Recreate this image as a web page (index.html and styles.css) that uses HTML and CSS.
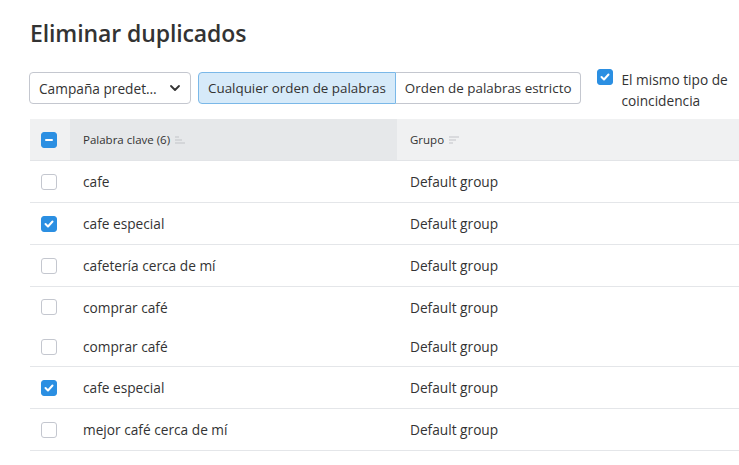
FILE: index.html
```html
<!DOCTYPE html>
<html lang="es">
<head>
<meta charset="utf-8">
<link rel="stylesheet" href="styles.css">
</head>
<body>
<div class="page">
  <h1 class="title">Eliminar duplicados</h1>
  <div class="controls">
    <div class="select">
      <span class="select-text">Campaña predet…</span>
      <svg class="chev" width="12" height="8" viewBox="0 0 12 8"><path d="M2 2l4 4 4-4" fill="none" stroke="#333" stroke-width="1.8" stroke-linecap="round" stroke-linejoin="round"/></svg>
    </div>
    <div class="segmented">
      <button class="seg active">Cualquier orden de palabras</button>
      <button class="seg">Orden de palabras estricto</button>
    </div>
    <label class="option">
      <span class="cb checked"><svg width="10" height="8" viewBox="0 0 10 8"><path d="M1.5 4l2.5 2.5 4.5-5" fill="none" stroke="#fff" stroke-width="2" stroke-linecap="round" stroke-linejoin="round"/></svg></span>
      <span class="option-text">El mismo tipo de<br>coincidencia</span>
    </label>
  </div>
  <div class="table">
    <div class="row head">
      <div class="c-check"><span class="cb checked"><span class="dash"></span></span></div>
      <div class="c-kw sorted">Palabra clave (6)
        <svg class="sort" width="10" height="8" viewBox="0 0 10 8"><path d="M0 1h4M0 4h7M0 7h10" stroke="#c2c4c8" stroke-width="1.2"/></svg>
      </div>
      <div class="c-grp">Grupo
        <svg class="sort" width="10" height="8" viewBox="0 0 10 8"><path d="M0 1h10M0 4h7M0 7h4" stroke="#c2c4c8" stroke-width="1.2"/></svg>
      </div>
    </div>
    <div class="row">
      <div class="c-check"><span class="cb"></span></div>
      <div class="c-kw">cafe</div>
      <div class="c-grp">Default group</div>
    </div>
    <div class="row">
      <div class="c-check"><span class="cb checked"><svg width="10" height="8" viewBox="0 0 10 8"><path d="M1.5 4l2.5 2.5 4.5-5" fill="none" stroke="#fff" stroke-width="2" stroke-linecap="round" stroke-linejoin="round"/></svg></span></div>
      <div class="c-kw">cafe especial</div>
      <div class="c-grp">Default group</div>
    </div>
    <div class="row">
      <div class="c-check"><span class="cb"></span></div>
      <div class="c-kw">cafetería cerca de mí</div>
      <div class="c-grp">Default group</div>
    </div>
    <div class="row short noborder">
      <div class="c-check"><span class="cb"></span></div>
      <div class="c-kw">comprar café</div>
      <div class="c-grp">Default group</div>
    </div>
    <div class="row short">
      <div class="c-check"><span class="cb"></span></div>
      <div class="c-kw">comprar café</div>
      <div class="c-grp">Default group</div>
    </div>
    <div class="row">
      <div class="c-check"><span class="cb checked"><svg width="10" height="8" viewBox="0 0 10 8"><path d="M1.5 4l2.5 2.5 4.5-5" fill="none" stroke="#fff" stroke-width="2" stroke-linecap="round" stroke-linejoin="round"/></svg></span></div>
      <div class="c-kw">cafe especial</div>
      <div class="c-grp">Default group</div>
    </div>
    <div class="row">
      <div class="c-check"><span class="cb"></span></div>
      <div class="c-kw">mejor café cerca de mí</div>
      <div class="c-grp">Default group</div>
    </div>
  </div>
</div>
</body>
</html>
```

FILE: styles.css
```css
* { box-sizing: border-box; }
html, body { margin: 0; padding: 0; background: #fff; }
body {
  font-family: "Open Sans", "Noto Sans", sans-serif;
  color: #333;
  font-size: 13.7px;
  overflow: hidden;
}
.page { padding: 17px 0 0 30px; width: 739px; }
.title {
  margin: 0;
  font-size: 23px;
  font-weight: 600;
  line-height: 32px;
  color: #333;
  letter-spacing: -0.1px;
}
.controls {
  display: flex;
  align-items: flex-start;
  margin-top: 19px;
  margin-left: -1px;
  height: 43px;
}
.select {
  width: 162px;
  height: 32px;
  border: 1px solid #c4c7cf;
  border-radius: 4px;
  display: flex;
  align-items: center;
  justify-content: space-between;
  padding: 0 9px;
  margin-top: 4px;
}
.segmented { display: flex; margin-left: 7px; margin-top: 4px; }
.seg {
  font-family: inherit;
  font-size: 13.4px;
  color: #333;
  height: 32px;
  background: #fff;
  border: 1px solid #c4c7cf;
  padding: 0 9px;
  margin: 0;
  cursor: pointer;
}
.seg:first-child { border-radius: 4px 0 0 4px; }
.seg:last-child { border-radius: 0 4px 4px 0; border-left: none; }
.seg.active { background: #d6eaf9; border-color: #7ab8e8; }
.option { display: flex; align-items: flex-start; margin-left: 16px; margin-top: 1px; }
.option-text { margin-left: 8px; line-height: 21px; margin-top: 0; }
.cb {
  width: 16px;
  height: 16px;
  border: 1px solid #c4c7cf;
  border-radius: 3px;
  background: #fff;
  display: inline-flex;
  align-items: center;
  justify-content: center;
  flex: none;
}
.cb.checked { background: #2b8fe2; border-color: #2b8fe2; }
.dash { width: 8px; height: 2px; background: #fff; border-radius: 1px; }
.table { margin-top: 8px; }
.row {
  display: flex;
  height: 42px;
  border-bottom: 1px solid #e4e6e9;
  align-items: stretch;
}
.row.short { height: 40px; }
.row.noborder { border-bottom: none; }
.row.head { background: #f0f1f2; height: 42px; font-size: 11.5px; border-bottom: 1px solid #e2e4e7; }
.c-check { width: 40px; display: flex; align-items: center; padding-left: 11px; }
.c-kw { width: 327px; display: flex; align-items: center; padding-left: 13px; }
.c-grp { flex: 1; display: flex; align-items: center; padding-left: 13px; }
.head .c-kw.sorted { background: #e6e8ea; }
.sort { margin-left: 5px; }
```
